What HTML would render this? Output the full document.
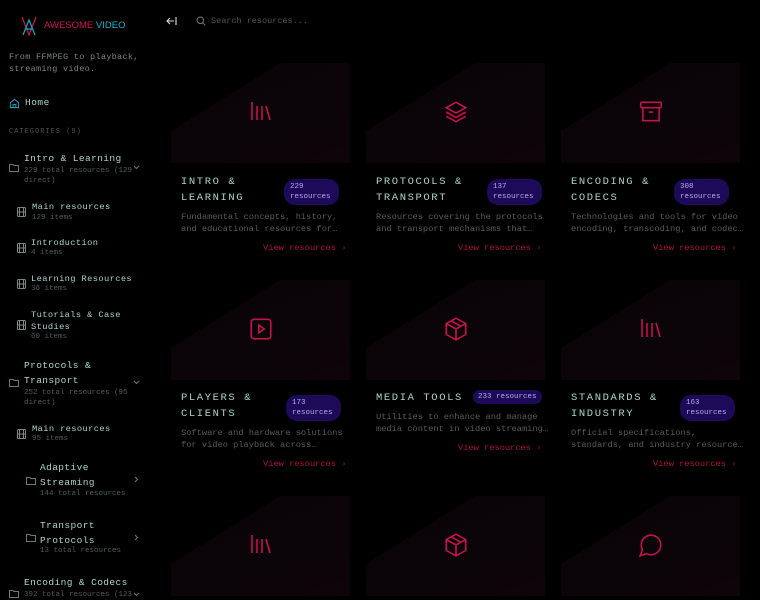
<!DOCTYPE html>
<html><head><meta charset="utf-8"><style>
*{margin:0;padding:0;box-sizing:border-box}
body{width:760px;height:600px;background:#000;overflow:hidden;position:relative;font-family:"Liberation Mono","DejaVu Sans Mono",monospace;color:#9cc9c2}
.a{position:absolute;white-space:nowrap}
.t{font-size:9.5px;letter-spacing:.4px;color:#a6d6ce}
.s{font-size:7.5px;color:#4e5e5c}
.img{position:absolute;width:179px;height:100px;background:linear-gradient(160deg,#0a0408,#0b0408 70%,#0f040b);clip-path:polygon(0 68%,61% 0,100% 0,100% 100%,0 100%)}
.img svg{position:absolute;left:77px;top:36px}
.ct{position:absolute;font-size:10.5px;letter-spacing:1.6px;color:#a6d6ce;line-height:16px}
.bd{position:absolute;background:#1d0a58;color:#b9a8f0;font-size:7.5px;border-radius:11px;padding:3px 8px 3px 6px;line-height:10px}
.ds{position:absolute;font-size:8.7px;color:#5b5b5b;line-height:12px;white-space:nowrap}
.vr{position:absolute;font-size:8.7px;color:#b3103f}
.cv{position:absolute}
</style></head><body>
<svg class="a" style="left:20px;top:16px" width="18" height="20" viewBox="0 0 18 20" fill="none" stroke-width="1.2">
<path d="M2 1 L9 19 L16 1" stroke="#d21454"/><path d="M3 19 L9 4 L15 19 M5 13 L13 13" stroke="#1aa9c4"/>
</svg>
<div class="a" style="left:44px;top:20px;font-family:'Liberation Sans',sans-serif;font-size:9.5px"><span style="color:#d21454">AWESOME</span> <span style="color:#1ab4d0">VIDEO</span></div>
<div class="a" style="left:9px;top:51px;font-size:8.5px;line-height:12px;color:#7a8584;letter-spacing:.3px">From FFMPEG to playback,<br>streaming video.</div>
<svg class="a" style="left:9px;top:98px" width="11" height="11" viewBox="0 0 24 24" fill="none" stroke="#1aa9c4" stroke-width="2"><path d="M3 10 L12 3 L21 10 V21 H3 Z M9 21 V14 H15 V21"/></svg>
<div class="a" style="left:25px;top:97px;font-size:9.5px;color:#a6d6ce;letter-spacing:.5px">Home</div>
<div class="a" style="left:9px;top:128px;font-size:7px;color:#4a5554;letter-spacing:1px">CATEGORIES (9)</div>

<div class="a t" style="left:24px;top:153px">Intro &amp; Learning</div>
<div class="a s" style="left:24px;top:166px;line-height:10px">229 total resources (129<br>direct)</div>
<svg class="a" style="left:9px;top:163px" width="10" height="9" viewBox="0 0 10 9" fill="none" stroke="#6c7a78"><path d="M.5 1.5 H4 L5 2.5 H9.5 V8.5 H.5 Z"/></svg>
<svg class="cv" style="left:133px;top:165px" width="7" height="5" viewBox="0 0 7 5" fill="none" stroke="#6c7a78"><path d="M1 1L3.5 3.5L6 1"/></svg>

<div class="a t" style="left:32px;top:202px;font-size:8.7px">Main resources</div>
<div class="a s" style="left:32px;top:214px">129 items</div>
<div class="a t" style="left:31px;top:238px;font-size:8.7px">Introduction</div>
<div class="a s" style="left:31px;top:249px">4 items</div>
<div class="a t" style="left:31px;top:274px;font-size:8.7px">Learning Resources</div>
<div class="a s" style="left:31px;top:285px">36 items</div>
<div class="a t" style="left:31px;top:309px;font-size:8.7px;line-height:12px">Tutorials &amp; Case<br>Studies</div>
<div class="a s" style="left:31px;top:333px">60 items</div>

<div class="a t" style="left:24px;top:359px;line-height:14.5px">Protocols &amp;<br>Transport</div>
<div class="a s" style="left:24px;top:388px;line-height:10px">252 total resources (95<br>direct)</div>
<svg class="a" style="left:9px;top:378px" width="10" height="9" viewBox="0 0 10 9" fill="none" stroke="#6c7a78"><path d="M.5 1.5 H4 L5 2.5 H9.5 V8.5 H.5 Z"/></svg>
<svg class="cv" style="left:133px;top:380px" width="7" height="5" viewBox="0 0 7 5" fill="none" stroke="#6c7a78"><path d="M1 1L3.5 3.5L6 1"/></svg>
<div class="a t" style="left:32px;top:424px;font-size:8.7px">Main resources</div>
<div class="a s" style="left:32px;top:435px">95 items</div>

<div class="a t" style="left:40px;top:461px;line-height:14.5px">Adaptive<br>Streaming</div>
<div class="a s" style="left:40px;top:490px">144 total resources</div>
<svg class="a" style="left:26px;top:476px" width="10" height="9" viewBox="0 0 10 9" fill="none" stroke="#6c7a78"><path d="M.5 1.5 H4 L5 2.5 H9.5 V8.5 H.5 Z"/></svg>
<svg class="cv" style="left:134px;top:476px" width="5" height="7" viewBox="0 0 5 7" fill="none" stroke="#6c7a78"><path d="M1 1L3.5 3.5L1 6"/></svg>
<div class="a t" style="left:40px;top:519px;line-height:14.5px">Transport<br>Protocols</div>
<div class="a s" style="left:40px;top:547px">13 total resources</div>
<svg class="a" style="left:26px;top:533px" width="10" height="9" viewBox="0 0 10 9" fill="none" stroke="#6c7a78"><path d="M.5 1.5 H4 L5 2.5 H9.5 V8.5 H.5 Z"/></svg>
<svg class="cv" style="left:134px;top:534px" width="5" height="7" viewBox="0 0 5 7" fill="none" stroke="#6c7a78"><path d="M1 1L3.5 3.5L1 6"/></svg>
<div class="a t" style="left:24px;top:577px">Encoding &amp; Codecs</div>
<div class="a s" style="left:24px;top:591px">392 total resources (123</div>
<svg class="a" style="left:9px;top:589px" width="10" height="9" viewBox="0 0 10 9" fill="none" stroke="#6c7a78"><path d="M.5 1.5 H4 L5 2.5 H9.5 V8.5 H.5 Z"/></svg>
<svg class="cv" style="left:133px;top:592px" width="7" height="5" viewBox="0 0 7 5" fill="none" stroke="#6c7a78"><path d="M1 1L3.5 3.5L6 1"/></svg>

<svg class="a" style="left:17px;top:207px" width="9" height="10" viewBox="0 0 9 10" fill="none" stroke="#7a8886"><rect x=".5" y=".5" width="8" height="9" rx="1"/><path d="M2.5 .5V9.5M6.5 .5V9.5M.5 5H8.5"/></svg>
<svg class="a" style="left:17px;top:243px" width="9" height="10" viewBox="0 0 9 10" fill="none" stroke="#7a8886"><rect x=".5" y=".5" width="8" height="9" rx="1"/><path d="M2.5 .5V9.5M6.5 .5V9.5M.5 5H8.5"/></svg>
<svg class="a" style="left:17px;top:279px" width="9" height="10" viewBox="0 0 9 10" fill="none" stroke="#7a8886"><rect x=".5" y=".5" width="8" height="9" rx="1"/><path d="M2.5 .5V9.5M6.5 .5V9.5M.5 5H8.5"/></svg>
<svg class="a" style="left:17px;top:320px" width="9" height="10" viewBox="0 0 9 10" fill="none" stroke="#7a8886"><rect x=".5" y=".5" width="8" height="9" rx="1"/><path d="M2.5 .5V9.5M6.5 .5V9.5M.5 5H8.5"/></svg>
<svg class="a" style="left:17px;top:429px" width="9" height="10" viewBox="0 0 9 10" fill="none" stroke="#7a8886"><rect x=".5" y=".5" width="8" height="9" rx="1"/><path d="M2.5 .5V9.5M6.5 .5V9.5M.5 5H8.5"/></svg>

<svg class="a" style="left:166px;top:16px" width="11" height="10" viewBox="0 0 11 10" fill="none" stroke="#ddd" stroke-width="1.1"><path d="M1 5H8M4 2L1 5L4 8M10 1V9"/></svg>
<svg class="a" style="left:196px;top:16px" width="10" height="10" viewBox="0 0 10 10" fill="none" stroke="#777"><circle cx="4.3" cy="4.3" r="3.3"/><path d="M6.8 6.8L9.3 9.3"/></svg>
<div class="a" style="left:211px;top:16px;font-size:8.5px;color:#555">Search resources...</div>

<div class="img" style="left:171px;top:63px"><svg width="24" height="24" viewBox="0 0 24 24" fill="none" stroke="#c4124a" stroke-width="1.6"><path d="M4 3V21M9 7V21M14 7V21M18 7L22 21"/></svg></div>
<div class="img" style="left:366px;top:63px"><svg width="26" height="26" viewBox="0 0 24 24" fill="none" stroke="#c4124a" stroke-width="1.5"><path d="M12 3L21 8L12 13L3 8Z M3 12L12 17L21 12 M3 16L12 21L21 16"/></svg></div>
<div class="img" style="left:561px;top:63px"><svg width="26" height="26" viewBox="0 0 24 24" fill="none" stroke="#c4124a" stroke-width="1.5"><rect x="2.5" y="3" width="19" height="5" rx="1"/><path d="M4.5 8V20H19.5V8M10 12H14"/></svg></div>

<div class="ct" style="left:181px;top:174px">INTRO &amp;<br>LEARNING</div>
<div class="bd" style="left:284px;top:179px">229<br>resources</div>
<div class="ds" style="left:181px;top:211px">Fundamental concepts, history,<br>and educational resources for…</div>
<div class="vr" style="left:263px;top:243px">View resources ›</div>

<div class="ct" style="left:376px;top:174px">PROTOCOLS &amp;<br>TRANSPORT</div>
<div class="bd" style="left:487px;top:179px">137<br>resources</div>
<div class="ds" style="left:376px;top:211px">Resources covering the protocols<br>and transport mechanisms that…</div>
<div class="vr" style="left:458px;top:243px">View resources ›</div>

<div class="ct" style="left:571px;top:174px">ENCODING &amp;<br>CODECS</div>
<div class="bd" style="left:674px;top:179px">308<br>resources</div>
<div class="ds" style="left:571px;top:211px">Technologies and tools for video<br>encoding, transcoding, and codec…</div>
<div class="vr" style="left:653px;top:243px">View resources ›</div>

<div class="img" style="left:171px;top:280px"><svg width="26" height="26" viewBox="0 0 24 24" fill="none" stroke="#c4124a" stroke-width="1.5"><rect x="3" y="3" width="18" height="18" rx="2.5"/><path d="M10 8.5L15 12L10 15.5Z"/></svg></div>
<div class="img" style="left:366px;top:280px"><svg width="26" height="26" viewBox="0 0 24 24" fill="none" stroke="#c4124a" stroke-width="1.5"><path d="M12 2L21 7V17L12 22L3 17V7Z M3 7L12 12L21 7 M12 12V22 M7.5 4.5L16.5 9.5"/></svg></div>
<div class="img" style="left:561px;top:280px"><svg width="24" height="24" viewBox="0 0 24 24" fill="none" stroke="#c4124a" stroke-width="1.6"><path d="M4 3V21M9 7V21M14 7V21M18 7L22 21"/></svg></div>

<div class="ct" style="left:181px;top:390px">PLAYERS &amp;<br>CLIENTS</div>
<div class="bd" style="left:286px;top:395px">173<br>resources</div>
<div class="ds" style="left:181px;top:427px">Software and hardware solutions<br>for video playback across…</div>
<div class="vr" style="left:263px;top:459px">View resources ›</div>

<div class="ct" style="left:376px;top:390px">MEDIA TOOLS</div>
<div class="bd" style="left:473px;top:390px;padding:2px 5px">233 resources</div>
<div class="ds" style="left:376px;top:411px">Utilities to enhance and manage<br>media content in video streaming…</div>
<div class="vr" style="left:458px;top:443px">View resources ›</div>

<div class="ct" style="left:571px;top:390px">STANDARDS &amp;<br>INDUSTRY</div>
<div class="bd" style="left:680px;top:395px">163<br>resources</div>
<div class="ds" style="left:571px;top:427px">Official specifications,<br>standards, and industry resource…</div>
<div class="vr" style="left:653px;top:459px">View resources ›</div>

<div class="img" style="left:171px;top:496px"><svg width="24" height="24" viewBox="0 0 24 24" fill="none" stroke="#c4124a" stroke-width="1.6"><path d="M4 3V21M9 7V21M14 7V21M18 7L22 21"/></svg></div>
<div class="img" style="left:366px;top:496px"><svg width="26" height="26" viewBox="0 0 24 24" fill="none" stroke="#c4124a" stroke-width="1.5"><path d="M12 2L21 7V17L12 22L3 17V7Z M3 7L12 12L21 7 M12 12V22 M7.5 4.5L16.5 9.5"/></svg></div>
<div class="img" style="left:561px;top:496px"><svg width="26" height="26" viewBox="0 0 24 24" fill="none" stroke="#c4124a" stroke-width="1.5"><path d="M7.9 20A9 9 0 1 0 4 16.1L2 22Z"/></svg></div>
</body></html>
